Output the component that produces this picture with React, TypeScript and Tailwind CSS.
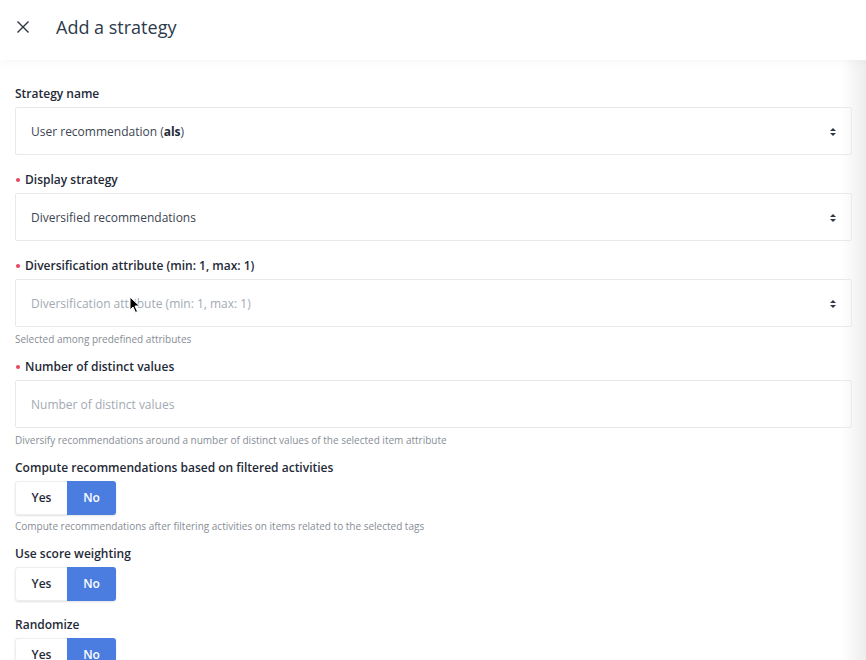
import React from 'react';

const SelectArrows = () => (
  <svg width="8" height="10" viewBox="0 0 8 10" className="text-[#2d3748]">
    <path d="M1 4 L4 1 L7 4 Z" fill="currentColor" />
    <path d="M1 6 L4 9 L7 6 Z" fill="currentColor" />
  </svg>
);

const Label = ({ text, required }: { text: string; required?: boolean }) => (
  <div className="flex items-center h-5 mb-[3px] text-[12px] font-semibold text-[#1f2a37]">
    {required && <span className="w-[4px] h-[4px] rounded-full bg-[#e8465f] ml-[1px] mr-[5px]" />}
    {text}
  </div>
);

const Help = ({ text }: { text: string }) => (
  <div className="mt-[4px] h-4 leading-4 text-[10px] text-[#878d96]">{text}</div>
);

const Toggle = () => (
  <div className="flex h-[34px] w-[101px] rounded-[3px] shadow-[0_1px_2px_rgba(0,0,0,0.12)] text-[12px] font-semibold">
    <div className="flex-1 flex items-center justify-center text-[#1f2a37] bg-white border border-[#eceef1] border-r-0 rounded-l-[3px]">Yes</div>
    <div className="w-[49px] flex items-center justify-center text-white bg-[#4a7ddf] rounded-r-[3px]">No</div>
  </div>
);

const Box = ({ children, arrows }: { children: React.ReactNode; arrows?: boolean }) => (
  <div className="flex items-center justify-between h-12 pl-[15px] pr-[14px] pt-[1px] border border-[#e7e9ec] rounded-[2px] bg-white text-[12px]">
    <div>{children}</div>
    {arrows && <SelectArrows />}
  </div>
);

const ToggleLabel = ({ text }: { text: string }) => (
  <div className="flex items-center h-5 mb-[3px] text-[12px] font-semibold text-[#1f2a37]">{text}</div>
);

export default function App() {
  return (
    <div className="relative h-[660px] w-[866px] overflow-hidden bg-white" style={{ fontFamily: '"Open Sans", sans-serif' }}>
      <div className="relative z-10 flex items-center h-[60px] pb-[6px] bg-white shadow-[0_2px_10px_rgba(0,0,0,0.04)]">
        <svg width="14" height="14" viewBox="0 0 14 14" className="ml-[16px] text-[#2b3440]">
          <path d="M1.5 1.5 L12.5 12.5 M12.5 1.5 L1.5 12.5" stroke="currentColor" strokeWidth="1.4" fill="none" />
        </svg>
        <div className="ml-[26px] text-[18px] text-[#2c3a4b]">Add a strategy</div>
      </div>

      <div className="pt-6 pl-[15px] pr-[14px] text-[#3b4552]">
        <Label text="Strategy name" />
        <Box arrows>
          User recommendation (<span className="font-bold text-[#1f2a37]">als</span>)
        </Box>

        <div className="mt-[15px]">
          <Label text="Display strategy" required />
          <Box arrows>Diversified recommendations</Box>
        </div>

        <div className="mt-[15px]">
          <Label text="Diversification attribute (min: 1, max: 1)" required />
          <Box arrows>
            <span className="text-[#a3aab3]">Diversification attribute (min: 1, max: 1)</span>
          </Box>
          <Help text="Selected among predefined attributes" />
        </div>

        <div className="mt-[10px]">
          <Label text="Number of distinct values" required />
          <Box>
            <span className="text-[#a3aab3]">Number of distinct values</span>
          </Box>
          <Help text="Diversify recommendations around a number of distinct values of the selected item attribute" />
        </div>

        <div className="mt-[10px]">
          <ToggleLabel text="Compute recommendations based on filtered activities" />
          <Toggle />
          <div className="mt-[3px] h-4 leading-4 text-[10px] text-[#878d96]">
            Compute recommendations after filtering activities on items related to the selected tags
          </div>
        </div>

        <div className="mt-[10px]">
          <ToggleLabel text="Use score weighting" />
          <Toggle />
        </div>

        <div className="mt-[14px]">
          <ToggleLabel text="Randomize" />
          <Toggle />
        </div>
      </div>

      {/* right edge shade */}
      <div className="pointer-events-none absolute top-0 right-0 h-full w-[24px] bg-gradient-to-r from-transparent to-[#ededed]" />

      {/* mouse cursor */}
      <svg className="pointer-events-none absolute left-[129px] top-[296px]" width="12" height="18" viewBox="0 0 12 18">
        <path d="M1 1 L1 14 L4 11 L6.5 16.5 L8.5 15.5 L6 10 L10.5 10 Z" fill="#000" stroke="#fff" strokeWidth="1" />
      </svg>
    </div>
  );
}
